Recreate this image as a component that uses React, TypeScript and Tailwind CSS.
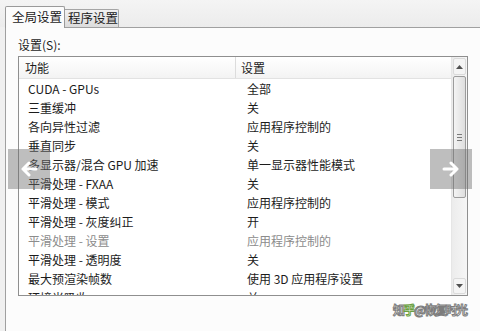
import React from 'react';

type Row = { name: string; value: string; dim?: boolean };

const rows: Row[] = [
  { name: 'CUDA - GPUs', value: '全部' },
  { name: '三重缓冲', value: '关' },
  { name: '各向异性过滤', value: '应用程序控制的' },
  { name: '垂直同步', value: '关' },
  { name: '多显示器/混合 GPU 加速', value: '单一显示器性能模式' },
  { name: '平滑处理 - FXAA', value: '关' },
  { name: '平滑处理 - 模式', value: '应用程序控制的' },
  { name: '平滑处理 - 灰度纠正', value: '开' },
  { name: '平滑处理 - 设置', value: '应用程序控制的', dim: true },
  { name: '平滑处理 - 透明度', value: '关' },
  { name: '最大预渲染帧数', value: '使用 3D 应用程序设置' },
  { name: '环境光吸收', value: '关' },
];

const font = { fontFamily: '"Noto Sans CJK SC", "Noto Sans", sans-serif' };

function Arrow({ dir }: { dir: 'left' | 'right' }) {
  return (
    <svg width="18" height="16" viewBox="0 0 18 16" className={dir === 'left' ? 'rotate-180' : ''}>
      <path d="M2 8 H15 M9 2 L15 8 L9 14" fill="none" stroke="white" strokeWidth="3" strokeLinecap="round" strokeLinejoin="round" />
    </svg>
  );
}

export default function App() {
  return (
    <div
      className="relative w-[480px] h-[331px] overflow-hidden bg-[#f0f0f0] text-[12px] text-[#1c1c1c]"
      style={font}
    >
      {/* tab strip */}
      <div className="flex items-end h-[27px] pl-[5px] bg-gradient-to-b from-[#f4f4f4] to-[#ececec]">
        <div className="relative z-10 w-[60px] h-[22px] -mb-px bg-[#fcfcfc] border border-b-0 border-[#9a9a9a] rounded-t-[2px] flex items-center pl-[6px] text-[12.5px] leading-none">
          全局设置
        </div>
        <div className="w-[54px] h-[18px] bg-gradient-to-b from-[#f2f2f2] to-[#dcdcdc] border border-l-0 border-b-0 border-[#a5a5a5] rounded-tr-[2px] flex items-center pl-[3px] text-[12.5px] leading-none">
          程序设置
        </div>
      </div>

      {/* panel */}
      <div className="ml-[5px] h-[304px] bg-[#fcfcfc] border-l border-t border-[#a0a0a0] pl-[12px] pt-[9px]">
        <div className="h-[16px] leading-[16px] mb-[3px]">设置(S):</div>

        <div className="w-[450px] h-[240px] border border-[#8f8f8f] bg-white flex overflow-hidden">
          <div className="flex-1 flex flex-col overflow-hidden">
            <div className="flex h-[22px] shrink-0 bg-gradient-to-b from-[#ffffff] to-[#f3f3f3] border-b border-[#e2e2e2]">
              <div className="w-[217px] pl-[6px] flex items-center border-r border-[#dcdcdc]">功能</div>
              <div className="flex-1 pl-[5px] flex items-center">设置</div>
            </div>
            {rows.map((r, i) => (
              <div
                key={i}
                className={`flex h-[19px] shrink-0 items-center ${r.dim ? 'text-[#8c8c8c]' : ''}`}
              >
                <div className="w-[218px] pl-[9px] whitespace-nowrap">{r.name}</div>
                <div className="flex-1 pl-[10px] whitespace-nowrap">{r.value}</div>
              </div>
            ))}
          </div>

          {/* scrollbar */}
          <div className="w-[16px] shrink-0 flex flex-col bg-gradient-to-r from-[#ececec] to-[#f6f6f6] border-l border-[#e6e6e6]">
            <div className="h-[17px] mt-px mx-px flex items-center justify-center border border-[#dadada] bg-[#f4f4f4] rounded-[2px]">
              <svg width="7" height="4" viewBox="0 0 7 4"><path d="M0 4 L3.5 0 L7 4 Z" fill="#505050" /></svg>
            </div>
            <div className="h-[122px] mt-px mx-px border border-[#9c9c9c] rounded-[2px] bg-gradient-to-r from-[#f4f4f4] to-[#dedede] flex flex-col items-center justify-center gap-[2px]">
              <div className="w-[5px] h-px bg-[#7a7a7a]" />
              <div className="w-[5px] h-px bg-[#7a7a7a]" />
              <div className="w-[5px] h-px bg-[#7a7a7a]" />
            </div>
            <div className="flex-1" />
            <div className="h-[16px] mb-px mx-px flex items-center justify-center border border-[#dadada] bg-[#f4f4f4] rounded-[2px]">
              <svg width="7" height="4" viewBox="0 0 7 4"><path d="M0 0 L3.5 4 L7 0 Z" fill="#505050" /></svg>
            </div>
          </div>
        </div>
      </div>

      {/* navigation overlays */}
      <div className="absolute left-[8px] top-[149px] w-[42px] h-[40px] bg-[rgba(110,110,110,0.45)] flex items-center justify-center">
        <Arrow dir="left" />
      </div>
      <div className="absolute left-[430px] top-[149px] w-[42px] h-[40px] bg-[rgba(110,110,110,0.45)] flex items-center justify-center">
        <Arrow dir="right" />
      </div>

      {/* watermark */}
      <div
        className="absolute left-[393px] top-[304px] whitespace-nowrap text-[12px] font-bold leading-none text-white tracking-[-1.5px]"
        style={{ WebkitTextStroke: '1px #7d7d7d' }}
      >
        知<span style={{ WebkitTextStroke: '1px #6aa040' }}>乎</span>@恢复时光
      </div>
    </div>
  );
}
